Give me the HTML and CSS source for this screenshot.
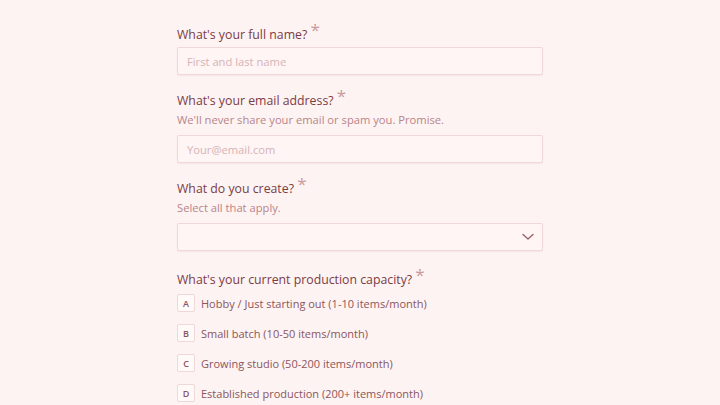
FILE: index.html
```html
<!DOCTYPE html>
<html>
<head>
<meta charset="utf-8">
<link rel="stylesheet" href="styles.css">
</head>
<body>
<form class="form">
  <div class="field">
    <label class="label">What's your full name? <span class="req">*</span></label>
    <div class="input"><span class="ph">First and last name</span></div>
  </div>
  <div class="field">
    <label class="label">What's your email address? <span class="req">*</span></label>
    <p class="desc">We'll never share your email or spam you. Promise.</p>
    <div class="input"><span class="ph">Your@email.com</span></div>
  </div>
  <div class="field">
    <label class="label">What do you create? <span class="req">*</span></label>
    <p class="desc">Select all that apply.</p>
    <div class="input select">
      <svg class="chev" width="12" height="8" viewBox="0 0 12 8"><path d="M1 1.5 L6 6 L11 1.5" fill="none" stroke="#9a6a6e" stroke-width="1.5" stroke-linecap="round" stroke-linejoin="round"/></svg>
    </div>
  </div>
  <div class="field field-choice">
    <label class="label">What's your current production capacity? <span class="req">*</span></label>
    <ul class="options">
      <li class="opt"><span class="key">A</span>Hobby / Just starting out (1-10 items/month)</li>
      <li class="opt"><span class="key">B</span>Small batch (10-50 items/month)</li>
      <li class="opt"><span class="key">C</span>Growing studio (50-200 items/month)</li>
      <li class="opt"><span class="key">D</span>Established production (200+ items/month)</li>
    </ul>
  </div>
</form>
</body>
</html>
```
FILE: styles.css
```css
html, body {
  margin: 0;
  padding: 0;
  background: #fdf3f2;
  font-family: "Open Sans", "Noto Sans", sans-serif;
  height: 405px;
  overflow: hidden;
}
.form {
  width: 366px;
  margin: 0 auto;
  padding-top: 25px;
  display: flex;
  flex-direction: column;
  gap: 16px;
}
.field {
  display: flex;
  flex-direction: column;
}
.field-choice {
  margin-top: 3px;
}
.label {
  font-size: 12.3px;
  font-weight: 500;
  color: #7a3c45;
  line-height: 20px;
  margin-bottom: 2px;
}
.req {
  color: #c99a9b;
  font-size: 17px;
  font-weight: 400;
  position: relative;
  top: -3px;
  line-height: 0;
}
.desc {
  margin: -2px 0 6px;
  font-size: 11.2px;
  color: #b98489;
  line-height: 18px;
}
.input {
  box-sizing: border-box;
  height: 28px;
  border: 1px solid #f1d8d8;
  border-radius: 2px;
  background: #fef5f4;
  display: flex;
  align-items: center;
  padding: 0 9px;
  box-shadow: 0 1px 1px rgba(200,150,150,0.12);
}
.ph {
  font-size: 11.2px;
  color: #d6b3b6;
}
.select {
  justify-content: flex-end;
  padding-right: 8px;
}
.options {
  list-style: none;
  margin: 0;
  padding: 2px 0 0;
  display: flex;
  flex-direction: column;
  gap: 12px;
}
.opt {
  display: flex;
  align-items: center;
  gap: 6px;
  font-size: 11px;
  color: #8b555c;
  height: 18px;
}
.key {
  box-sizing: border-box;
  width: 18px;
  height: 18px;
  border: 1px solid #f1d8d8;
  border-radius: 2px;
  background: #fff9f8;
  display: flex;
  align-items: center;
  justify-content: center;
  font-size: 9px;
  font-weight: 600;
  color: #8b555c;
}
```
